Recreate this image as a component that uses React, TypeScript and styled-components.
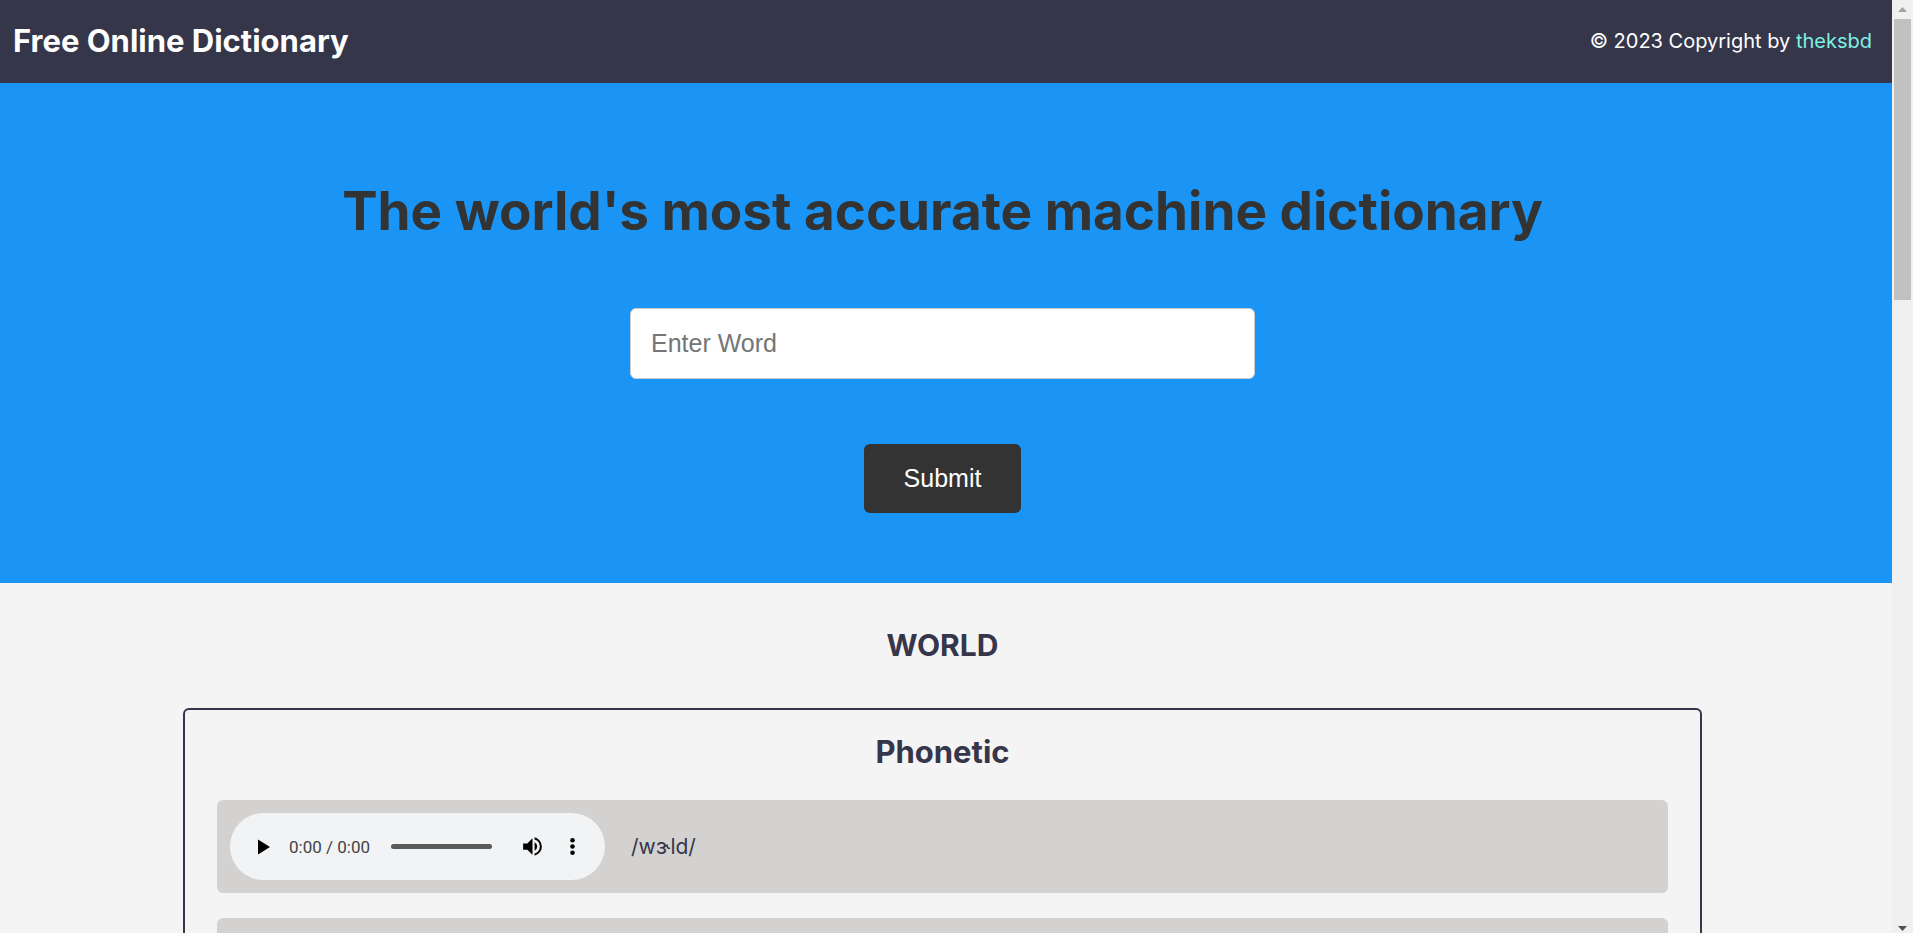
import React, { useState } from 'react';
import styled, { createGlobalStyle } from 'styled-components';

const ink = '#36364a';
const body = 'Inter, "Noto Sans", sans-serif';
const control = '"Liberation Sans", Arial, sans-serif';

const GlobalStyle = createGlobalStyle`
  *, *::before, *::after { box-sizing: border-box; }
  body {
    margin: 0;
    background: #f4f4f4;
    color: ${ink};
    font-family: ${body};
  }
  h1, h2, h3, p { margin: 0; }
`;

const Shell = styled.div`
  display: flex;
  height: 100vh;
  overflow: hidden;
`;

const Page = styled.div`
  flex: 1;
  min-width: 0;
  overflow-y: auto;
  scrollbar-width: none;
`;

const Header = styled.header`
  display: flex;
  align-items: center;
  justify-content: space-between;
  height: 83px;
  padding: 0 20px 2px 13px;
  background: ${ink};
  color: #fff;
`;

const SiteTitle = styled.h1`
  font-size: 31px;
  line-height: 40px;
`;

const Copyright = styled.p`
  font-size: 20px;
  line-height: 32px;
`;

const AuthorLink = styled.a`
  color: #7df0e4;
  text-decoration: none;
`;

const Hero = styled.section`
  display: flex;
  flex-direction: column;
  align-items: center;
  gap: 57px;
  padding: 88px 7px 70px 0;
  background: #1a95f5;
`;

const HeroTitle = styled.h2`
  color: #333;
  font-size: 53px;
  line-height: 80px;
  text-align: center;
`;

const SearchForm = styled.form`
  display: flex;
  flex-direction: column;
  align-items: center;
  gap: 65px;
  width: 100%;
`;

const WordInput = styled.input`
  width: 625px;
  max-width: 100%;
  height: 71px;
  padding: 0 20px;
  border: 1px solid #ccc;
  border-radius: 6px;
  background: #fff;
  color: #333;
  font: 25px ${control};
  &::placeholder { color: #757575; opacity: 1; }
`;

const SubmitButton = styled.button`
  height: 69px;
  padding: 0 40px;
  border: 0;
  border-radius: 6px;
  background: #333;
  color: #fff;
  font: 25px ${control};
  cursor: pointer;
`;

const Results = styled.main`
  display: flex;
  flex-direction: column;
  gap: 39px;
  padding: 38px 190px 40px 183px;
`;

const WordTitle = styled.h2`
  font-size: 30px;
  line-height: 48px;
  text-align: center;
`;

const CardTitle = styled.h3`
  font-size: 31px;
  line-height: 48px;
  text-align: center;
`;

const Card = styled.section`
  display: flex;
  flex-direction: column;
  gap: 24px;
  padding: 18px 32px 32px;
  border: 2px solid ${ink};
  border-radius: 6px;
`;

const PhoneticList = styled.div`
  display: flex;
  flex-direction: column;
  gap: 25px;
`;

const PhoneticRow = styled.div`
  display: flex;
  align-items: center;
  gap: 26px;
  min-height: 93px;
  padding: 13px;
  border-radius: 6px;
  background: #d3d2d0;
`;

const PhoneticText = styled.p`
  font-size: 21px;
  line-height: 32px;
`;

const Player = styled.div`
  display: flex;
  align-items: center;
  width: 375px;
  height: 67px;
  padding: 0 13px 0 14px;
  border-radius: 34px;
  background: #f1f3f5;
`;

const IconButton = styled.button`
  display: grid;
  place-items: center;
  flex: none;
  width: 40px;
  height: 40px;
  padding: 0;
  border: 0;
  background: transparent;
  color: #000;
  cursor: pointer;
`;

const Time = styled.span`
  flex: none;
  margin: 0 21px 0 5px;
  color: #444;
  font: 17px/24px Roboto, sans-serif;
`;

const Timeline = styled.input`
  appearance: none;
  flex: 1;
  min-width: 0;
  height: 5px;
  margin: 0 20px 0 0;
  border-radius: 3px;
  background: #5a5a5a;
  &::-webkit-slider-thumb {
    appearance: none;
    width: 1px;
    height: 5px;
    background: transparent;
  }
`;

const Scrollbar = styled.div`
  display: flex;
  flex-direction: column;
  align-items: center;
  flex: none;
  width: 21px;
  background: #f0f0f0;
`;

const ScrollArrow = styled.div<{ $tone: string; $height: number }>`
  display: grid;
  place-items: center;
  flex: none;
  width: 100%;
  height: ${(p) => p.$height}px;
  color: ${(p) => p.$tone};
`;

const ScrollTrack = styled.div`
  display: flex;
  justify-content: center;
  flex: 1;
  width: 100%;
`;

const ScrollThumb = styled.div`
  width: 17px;
  height: 31%;
  background: #c1c1c1;
`;

const PlayIcon = () => (
  <svg width="12" height="16" viewBox="0 0 12 16" fill="currentColor" aria-hidden="true">
    <path d="M0 .5v15L12 8z" />
  </svg>
);

const VolumeIcon = () => (
  <svg width="25" height="25" viewBox="0 0 24 24" fill="currentColor" aria-hidden="true">
    <path d="M3 9v6h4l5 5V4L7 9H3zm13.5 3A4.5 4.5 0 0 0 14 7.97v8.05A4.47 4.47 0 0 0 16.500 12zM14 3.230v2.060a7 7 0 0 1 0 13.420v2.060a9 9 0 0 0 0-17.540z" />
  </svg>
);

const MoreIcon = () => (
  <svg width="25" height="25" viewBox="0 0 24 24" fill="currentColor" aria-hidden="true">
    <circle cx="12" cy="6" r="2.200" />
    <circle cx="12" cy="12" r="2.200" />
    <circle cx="12" cy="18" r="2.200" />
  </svg>
);

const phonetics = [
  { id: 'us', text: '/wɝld/', hasAudio: true },
  { id: 'uk', text: '/wɜːld/', hasAudio: false },
];

function AudioPlayer() {
  return (
    <Player role="group" aria-label="Pronunciation">
      <IconButton type="button" aria-label="Play"><PlayIcon /></IconButton>
      <Time>0:00 / 0:00</Time>
      <Timeline type="range" min={0} max={100} defaultValue={0} aria-label="Audio position" />
      <IconButton type="button" aria-label="Mute"><VolumeIcon /></IconButton>
      <IconButton type="button" aria-label="More options"><MoreIcon /></IconButton>
    </Player>
  );
}

export default function App() {
  const [word, setWord] = useState('');
  return (
    <>
      <GlobalStyle />
      <Shell>
        <Page>
          <Header>
            <SiteTitle>Free Online Dictionary</SiteTitle>
            <Copyright>
              © 2023 Copyright by <AuthorLink href="#theksbd">theksbd</AuthorLink>
            </Copyright>
          </Header>
          <Hero>
            <HeroTitle>The world's most accurate machine dictionary</HeroTitle>
            <SearchForm onSubmit={(e) => e.preventDefault()}>
              <WordInput
                type="text"
                aria-label="Enter Word"
                placeholder="Enter Word"
                value={word}
                onChange={(e) => setWord(e.target.value)}
              />
              <SubmitButton type="submit">Submit</SubmitButton>
            </SearchForm>
          </Hero>
          <Results>
            <WordTitle>WORLD</WordTitle>
            <Card>
              <CardTitle>Phonetic</CardTitle>
              <PhoneticList>
                {phonetics.map((p) => (
                  <PhoneticRow key={p.id}>
                    {p.hasAudio && <AudioPlayer />}
                    <PhoneticText>{p.text}</PhoneticText>
                  </PhoneticRow>
                ))}
              </PhoneticList>
            </Card>
          </Results>
        </Page>
        <Scrollbar aria-hidden="true">
          <ScrollArrow $tone="#a3a3a3" $height={19}>
            <svg width="9" height="5" viewBox="0 0 9 5" fill="currentColor"><path d="M0 5 4.500 0 9 5z" /></svg>
          </ScrollArrow>
          <ScrollTrack><ScrollThumb /></ScrollTrack>
          <ScrollArrow $tone="#505050" $height={9}>
            <svg width="9" height="5" viewBox="0 0 9 5" fill="currentColor"><path d="M0 0h9L4.500 5z" /></svg>
          </ScrollArrow>
        </Scrollbar>
      </Shell>
    </>
  );
}
